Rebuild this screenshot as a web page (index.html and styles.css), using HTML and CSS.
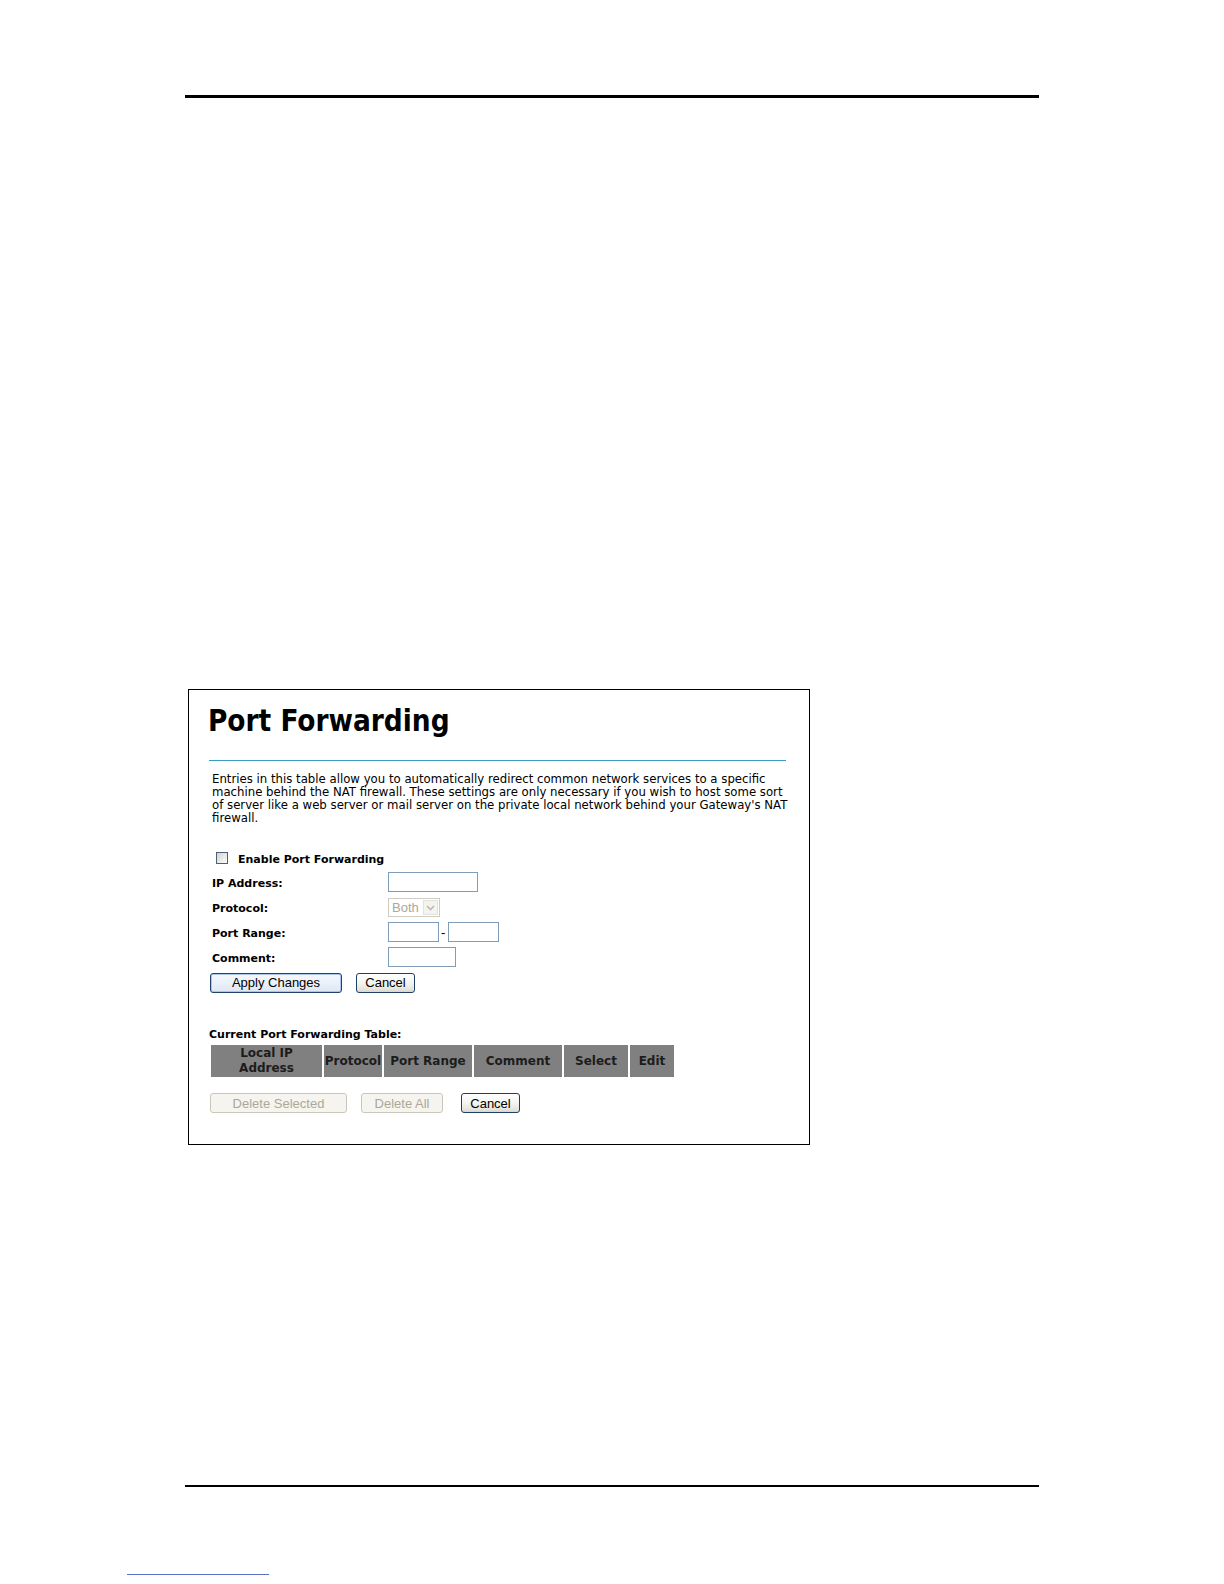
FILE: index.html
```html
<!DOCTYPE html>
<html>
<head>
<meta charset="utf-8">
<title>Port Forwarding</title>
<link rel="stylesheet" href="styles.css">
</head>
<body>
<div class="page">
  <div class="rule-top"></div>

  <div class="shot">
    <h1 class="title">Port Forwarding</h1>
    <div class="divider"></div>
    <p class="intro">Entries in this table allow you to automatically redirect common network services to a specific<br>machine behind the NAT firewall. These settings are only necessary if you wish to host some sort<br>of server like a web server or mail server on the private local network behind your Gateway's NAT<br>firewall.</p>

    <div class="enable">
      <span class="checkbox"></span>
      <span class="enable-text">Enable Port Forwarding</span>
    </div>

    <div class="form-grid">
      <div class="label">IP Address:</div>
      <div class="field"><span class="input w-ip"></span></div>

      <div class="label">Protocol:</div>
      <div class="field">
        <span class="select">
          <span class="select-text">Both</span>
          <span class="select-arrow"><svg width="9" height="6" viewBox="0 0 9 6"><path d="M1 1 L4.5 4.5 L8 1" fill="none" stroke="#b9b9b9" stroke-width="1.6"/></svg></span>
        </span>
      </div>

      <div class="label">Port Range:</div>
      <div class="field"><span class="input w-port"></span><span class="dash">-</span><span class="input w-port"></span></div>

      <div class="label">Comment:</div>
      <div class="field"><span class="input w-comment"></span></div>
    </div>

    <div class="actions">
      <button class="btn btn-default w-apply">Apply Changes</button>
      <button class="btn w-cancel1">Cancel</button>
    </div>

    <div class="table-label">Current Port Forwarding Table:</div>
    <div class="table-head">
      <div class="th c1">Local IP<br>Address</div>
      <div class="th c2">Protocol</div>
      <div class="th c3">Port Range</div>
      <div class="th c4">Comment</div>
      <div class="th c5">Select</div>
      <div class="th c6">Edit</div>
    </div>

    <div class="bottom-actions">
      <button class="btn btn-disabled w-delsel" disabled>Delete Selected</button>
      <button class="btn btn-disabled w-delall" disabled>Delete All</button>
      <button class="btn w-cancel2">Cancel</button>
    </div>
  </div>

  <div class="rule-bottom"></div>
  <div class="footer-link"></div>
</div>
</body>
</html>
```

FILE: styles.css
```css
html, body {
  margin: 0;
  padding: 0;
  background: #ffffff;
}

.page {
  width: 1224px;
  height: 1584px;
  padding-top: 95px;
  box-sizing: border-box;
  font-family: "DejaVu Sans", Verdana, sans-serif;
  color: #000;
}

.rule-top {
  margin-left: 185px;
  width: 854px;
  height: 3px;
  background: #000;
}

.shot {
  margin: 591px 0 0 188px;
  width: 622px;
  height: 456px;
  box-sizing: border-box;
  border: 1px solid #000;
  padding: 14px 0 0 19px;
}

.title {
  margin: 0;
  font-family: "DejaVu Sans Condensed", "DejaVu Sans", sans-serif;
  font-stretch: condensed;
  font-weight: 700;
  font-size: 29.4px;
  line-height: 34px;
  color: #000;
}

.divider {
  margin: 22px 0 0 1px;
  width: 577px;
  height: 1px;
  background: #3a9bc4;
}

.intro {
  margin: 12px 0 0 4px;
  font-size: 11.72px;
  line-height: 13px;
  white-space: nowrap;
}

.enable {
  margin: 24px 0 0 8px;
  height: 21px;
  display: flex;
  align-items: center;
  gap: 10px;
}

.checkbox {
  width: 12px;
  height: 12px;
  margin-top: -3px;
  box-sizing: border-box;
  border: 1px solid #4d6078;
  background: linear-gradient(135deg, #d3d3d0 0%, #ecece9 60%, #fbfbfb 100%);
}

.enable-text,
.label {
  font-weight: 700;
  font-size: 11px;
}

.form-grid {
  margin-left: 4px;
  display: grid;
  grid-template-columns: 176px auto;
  grid-auto-rows: 25px;
  align-items: center;
}

.label {
  padding-top: 1px;
}

.field {
  display: flex;
  align-items: center;
}

.input {
  display: block;
  height: 20px;
  margin-top: -1px;
  box-sizing: border-box;
  border: 1px solid #7f9db9;
  background: #fff;
}

.w-ip { width: 90px; }
.w-port { width: 51px; }
.w-comment { width: 68px; }

.dash {
  width: 9px;
  padding-left: 2px;
  box-sizing: border-box;
  font-family: "Liberation Sans", Arial, sans-serif;
  font-size: 13px;
  line-height: 20px;
}

.select {
  display: flex;
  align-items: center;
  width: 52px;
  height: 19px;
  box-sizing: border-box;
  border: 1px solid #cfcdc3;
  background: #fff;
}

.select-text {
  flex: 1;
  padding-left: 3px;
  font-family: "Liberation Sans", Arial, sans-serif;
  font-size: 13px;
  color: #aca899;
}

.select-arrow {
  width: 15px;
  height: 15px;
  margin-right: 1px;
  box-sizing: border-box;
  border: 1px solid #e3e2de;
  background: #f4f3ee;
  display: flex;
  align-items: center;
  justify-content: center;
}

.actions {
  margin-left: 2px;
  height: 25px;
  display: flex;
  align-items: center;
  gap: 14px;
}

.btn {
  height: 20px;
  padding: 0;
  box-sizing: border-box;
  border: 1px solid #1f3f66;
  border-radius: 3px;
  background: linear-gradient(#ffffff 0%, #f4f4f0 50%, #e6e4dc 85%, #d9d5cb 100%);
  font-family: "Liberation Sans", Arial, sans-serif;
  font-size: 13px;
  line-height: 17px;
  color: #000;
  text-align: center;
}

.btn-default {
  border-color: #23406a;
  box-shadow: inset 0 0 0 1px #a9c6ec;
  background: linear-gradient(#f6f9fd 0%, #eaf1fb 50%, #dde6f2 100%);
}

.btn-disabled {
  border-color: #c9c7ba;
  background: #f5f4ef;
  color: #aca899;
}

.w-apply { width: 132px; }
.w-cancel1 { width: 59px; }
.w-delsel { width: 137px; }
.w-delall { width: 82px; margin-left: 14px; }
.w-cancel2 { width: 59px; margin-left: 18px; }

.table-label {
  margin: 32px 0 0 1px;
  font-weight: 700;
  font-size: 11px;
  line-height: 16px;
}

.table-head {
  margin: 2px 0 0 3px;
  height: 32px;
  display: flex;
  gap: 2px;
}

.th {
  background: #808080;
  color: #1c1c1c;
  font-weight: 700;
  font-size: 12px;
  line-height: 15px;
  display: flex;
  align-items: center;
  justify-content: center;
  text-align: center;
  white-space: nowrap;
}

.c1 { width: 111px; }
.c2 { width: 58px; }
.c3 { width: 88px; }
.c4 { width: 88px; }
.c5 { width: 64px; }
.c6 { width: 44px; }

.bottom-actions {
  margin: 16px 0 0 2px;
  height: 20px;
  display: flex;
}

.rule-bottom {
  margin: 340px 0 0 185px;
  width: 854px;
  height: 2px;
  background: #000;
}

.footer-link {
  margin: 87px 0 0 127px;
  width: 142px;
  height: 1px;
  background: #5a6fc9;
}
```
